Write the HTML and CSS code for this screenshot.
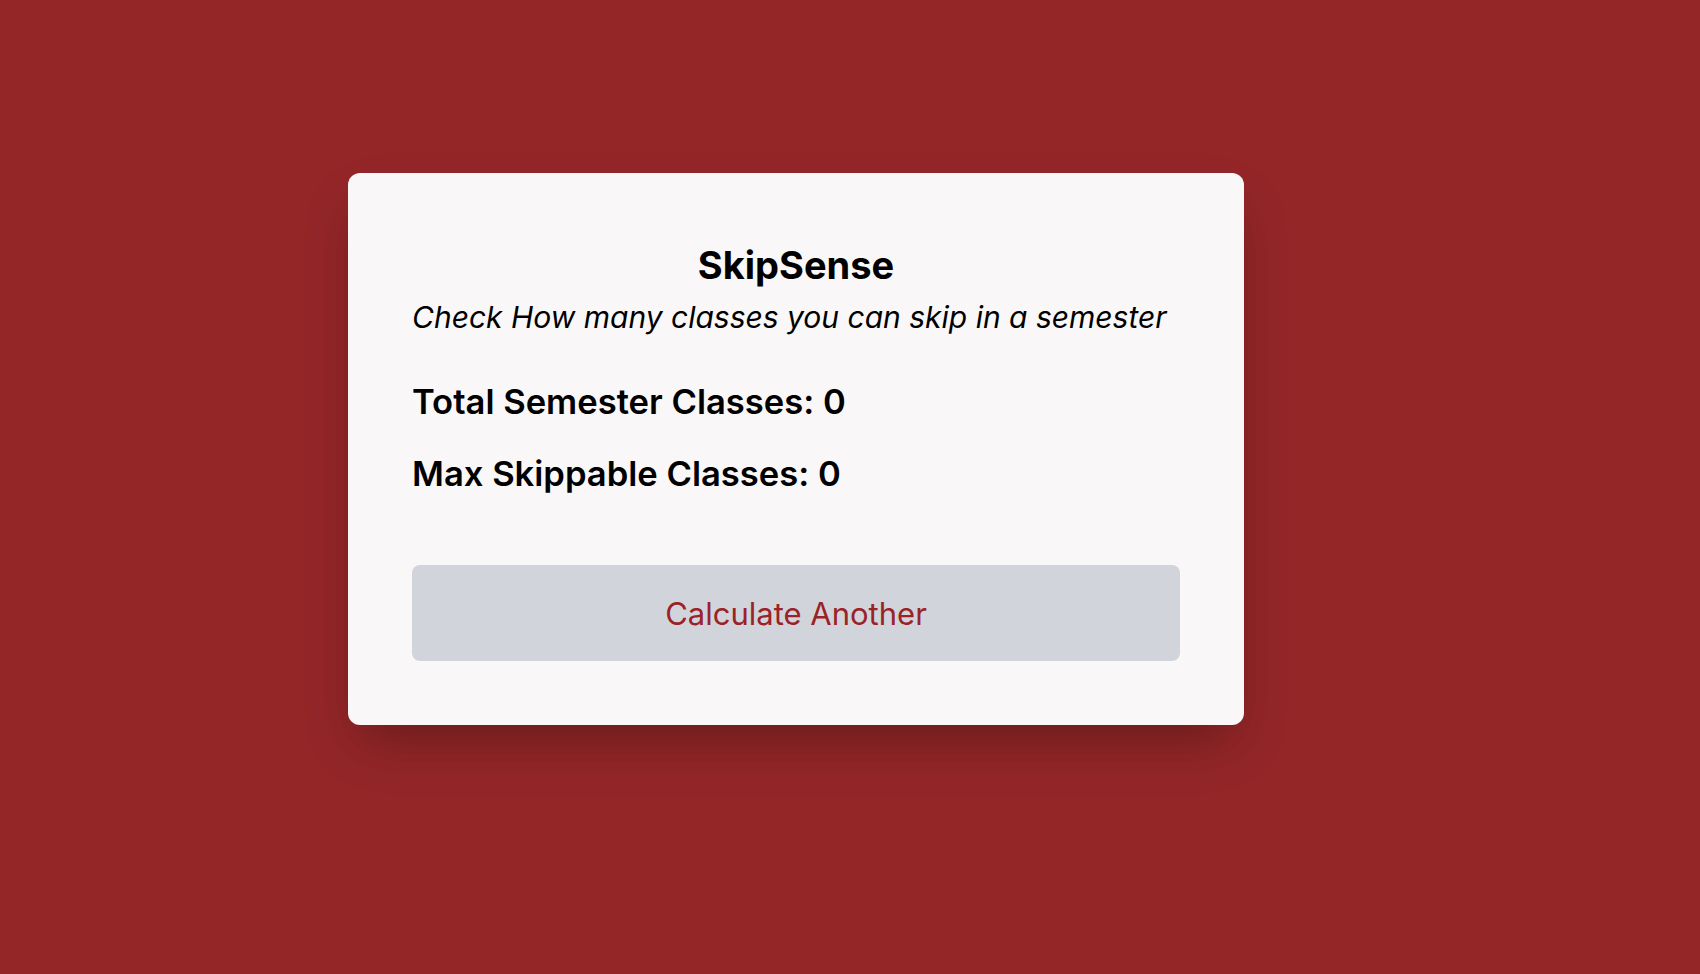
FILE: index.html
```html
<!DOCTYPE html>
<html lang="en">
<head>
<meta charset="utf-8">
<title>SkipSense</title>
<link rel="stylesheet" href="styles.css">
</head>
<body>
<main class="page">
  <section class="card">
    <header class="card-head">
      <h1 class="title">SkipSense</h1>
      <p class="subtitle">Check How many classes you can skip in a semester</p>
    </header>
    <div class="stats">
      <p class="stat">Total Semester Classes: 0</p>
      <p class="stat">Max Skippable Classes: 0</p>
    </div>
    <button class="btn" type="button">Calculate Another</button>
  </section>
</main>
</body>
</html>
```
FILE: styles.css
```css
* { box-sizing: border-box; }
html, body { margin: 0; padding: 0; }
body {
  background: #942628;
  font-family: Inter, "Noto Sans", "Liberation Sans", sans-serif;
  color: #000;
}
.page {
  min-height: 100vh;
  display: flex;
  align-items: center;
  justify-content: center;
  padding: 0 108px 76px 0;
}
.card {
  width: 896px;
  background: #faf7f8;
  border-radius: 12px;
  padding: 72px 64px 64px;
  box-shadow: 0 25px 50px -12px rgba(0,0,0,0.3);
  display: flex;
  flex-direction: column;
}
.card-head { text-align: center; }
.title {
  margin: 0;
  font-size: 38px;
  line-height: 40px;
  font-weight: 700;
}
.subtitle {
  margin: 14px 0 0;
  font-size: 30px;
  line-height: 36px;
  font-style: italic;
  font-weight: 400;
  white-space: nowrap;
  text-align: left;
}
.stats {
  margin-top: 46px;
  display: flex;
  flex-direction: column;
  gap: 32px;
}
.stat {
  margin: 0;
  font-size: 34.6px;
  line-height: 40px;
  font-weight: 600;
}
.btn {
  margin-top: 72px;
  height: 96px;
  width: 100%;
  border: 0;
  border-radius: 8px;
  background: #d1d5db;
  color: #9b2226;
  font-family: inherit;
  font-size: 31px;
  font-weight: 400;
  cursor: pointer;
}
```
